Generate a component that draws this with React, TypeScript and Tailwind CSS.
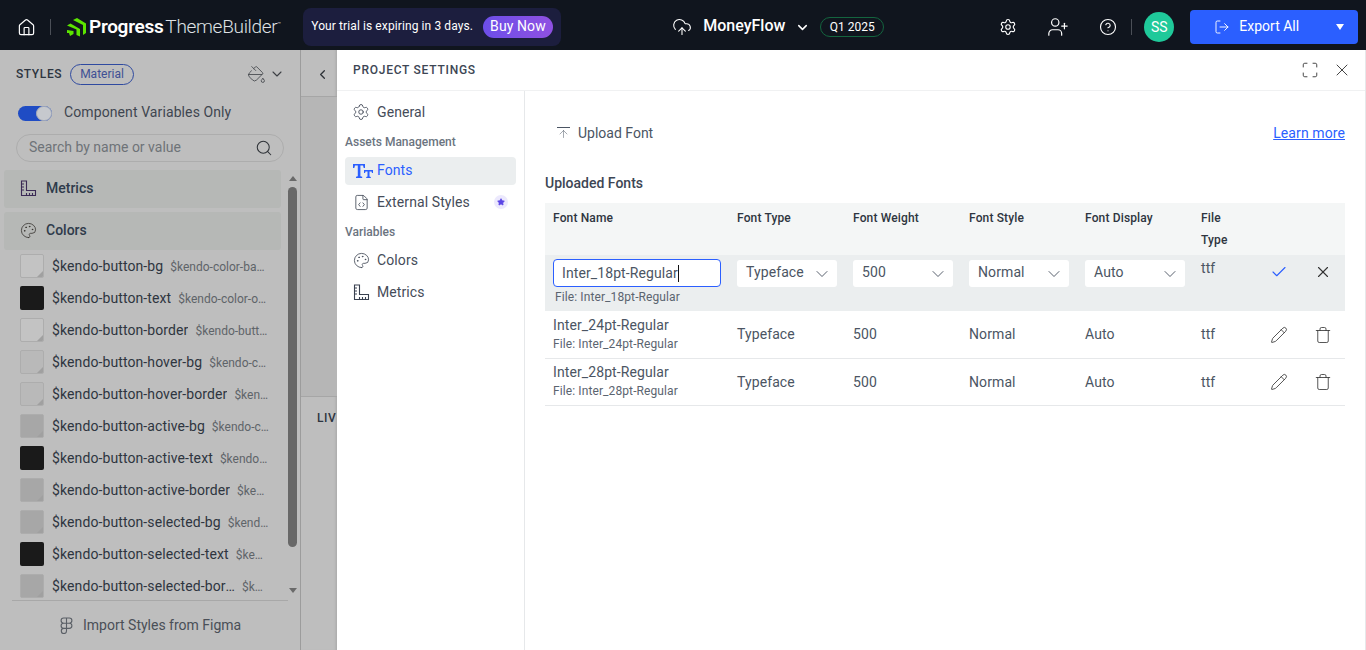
import React from "react";
import { Settings, UserPlus, CircleHelp, ChevronDown, ChevronLeft, Search, X, Check, Pencil, Trash, ArrowUp, Maximize, LogOut, Palette, FileCode, CloudUpload, Home, PaintBucket, Star } from "lucide-react";

const font = "font-['Roboto',sans-serif]";

const Ruler = ({ c = "#3a4150" }: { c?: string }) => (
  <svg width="17" height="17" viewBox="0 0 17 17" fill="none" stroke={c} strokeWidth="1.1">
    <path d="M1.500 1h5v9.500h9v5h-14z" />
    <path d="M1.500 4h2.500M1.500 7h2.500M1.500 10h2.500M6.500 15.500v-2.500M9.500 15.500v-2.500M12.500 15.500v-2.500" />
  </svg>
);

const Figma = () => (
  <svg width="13" height="17" viewBox="0 0 13 17" fill="none" stroke="#5a5f66" strokeWidth="1.1">
    <path d="M6.500 1H3.700a2.600 2.600 0 0 0 0 5.200h2.800zM6.500 1h2.800a2.600 2.600 0 0 1 0 5.200H6.500zM6.500 6.200H3.700a2.600 2.600 0 0 0 0 5.200h2.800zM6.500 6.200h2.800a2.600 2.600 0 0 1 0 5.200H6.500zM6.500 11.400H3.700a2.600 2.600 0 1 0 2.800 2.600z" />
  </svg>
);

const Logo = () => (
  <svg width="19" height="19" viewBox="0 0 19 19" fill="#5ce500">
    <path d="M6 2l4-2 9 5.500V15l-3 2V7zM0 7.500l3.500-2L13 11v7.500l-3.500-1.500V11.500zM0 12l6.500 1v3l-3.500 2-1-3H0z" />
  </svg>
);

const TT = () => (
  <svg width="20" height="14" viewBox="0 0 20 14" fill="#2b5fff">
    <path d="M0 0h12v4h-1.300L10 1.600H7.400v10.600l1.800.6V14H3v-1.200l1.800-.6V1.600H2L1.300 4H0zM11 6h9v3h-1l-.5-1.600h-2v5l1.300.5V14h-4.600v-1.100l1.300-.5v-5h-2L12 9h-1z" />
  </svg>
);

const swatches: { name: string; ref: string; color: string }[] = [
  { name: "$kendo-button-bg", ref: "$kendo-color-base-subtle", color: "#c3c3c3" },
  { name: "$kendo-button-text", ref: "$kendo-color-on-base-subtle", color: "#1a1a1a" },
  { name: "$kendo-button-border", ref: "$kendo-button-bg-color-value", color: "#c3c3c3" },
  { name: "$kendo-button-hover-bg", ref: "$kendo-color-base-subtle-hover", color: "#b9b9b9" },
  { name: "$kendo-button-hover-border", ref: "$kendo-button-hover-bg", color: "#b9b9b9" },
  { name: "$kendo-button-active-bg", ref: "$kendo-color-base-active", color: "#a7a7a7" },
  { name: "$kendo-button-active-text", ref: "$kendo-color-on-base", color: "#1a1a1a" },
  { name: "$kendo-button-active-border", ref: "$kendo-button-active-bg", color: "#a7a7a7" },
  { name: "$kendo-button-selected-bg", ref: "$kendo-color-base-active", color: "#a7a7a7" },
  { name: "$kendo-button-selected-text", ref: "$kendo-color-on-base", color: "#1a1a1a" },
  { name: "$kendo-button-selected-border", ref: "$kendo-button-selected-bg", color: "#a7a7a7" },
];

function Swatch({ color }: { color: string }) {
  const dark = color === "#1a1a1a";
  return (
    <span
      className={`relative block h-6 w-6 shrink-0 overflow-hidden rounded-[2px] ${dark ? "" : "border border-[#adadad]"}`}
      style={{ backgroundColor: color }}
    >
      {!dark && <span className="absolute bottom-0 right-0 h-0 w-0 border-b-[6px] border-l-[6px] border-b-[#a0a0a0] border-l-transparent" />}
    </span>
  );
}

function SwatchRow({ name, refName, color }: { name: string; refName: string; color: string }) {
  return (
    <div className="flex h-8 shrink-0 items-center pl-4 pr-3">
      <Swatch color={color} />
      <span className="ml-2 max-w-[183px] shrink-0 truncate text-[14px] leading-5 tracking-[0.1px] text-[#2e3540]">{name}</span>
      <span className="ml-[7px] mt-[2px] min-w-0 flex-1 truncate text-[12px] text-[#5e6469]">{refName}</span>
    </div>
  );
}

function Select({ value }: { value: string }) {
  return (
    <div className="flex h-[27px] w-[100px] items-center justify-between rounded-[3px] bg-white pl-[9px] pr-[5px] text-[14px] tracking-[0.1px] text-[#4b5563]">
      <span className="pb-[2px]">{value}</span>
      <ChevronDown size={20} strokeWidth={1} className="text-[#374151]" />
    </div>
  );
}

function NavItem({ icon, label, active, extra }: { icon: React.ReactNode; label: string; active?: boolean; extra?: React.ReactNode }) {
  return (
    <div className={`flex h-7 w-[171px] items-center rounded-[4px] pl-2 text-[14px] tracking-[0.1px] ${active ? "bg-[#ebeeef] pb-px text-[#2b5fff]" : "text-[#454c59]"}`}>
      <span className="flex w-6 shrink-0 items-center">{icon}</span>
      <span>{label}</span>
      {extra}
    </div>
  );
}

function FontRow({ n, h }: { n: string; h: string }) {
  return (
    <div className={`flex items-center border-b border-[#e6e8ea] text-[14px] tracking-[0.1px] text-[#4b5563] ${h}`}>
      <div className="w-[192px] pl-2">
        <div className="leading-[18px]">Inter_{n}pt-Regular</div>
        <div className="text-[12px] leading-[20px] text-[#5b6470]">File: Inter_{n}pt-Regular</div>
      </div>
      <div className="w-[116px]">Typeface</div>
      <div className="w-[116px]">500</div>
      <div className="w-[116px]">Normal</div>
      <div className="w-[116px]">Auto</div>
      <div className="w-[69px]">ttf</div>
      <Pencil size={18} strokeWidth={1.1} className="text-[#333]" />
      <Trash size={18} strokeWidth={1.1} className="ml-[26px] text-[#333]" />
    </div>
  );
}

export default function App() {
  return (
    <div className={`flex h-[650px] w-[1366px] flex-col overflow-hidden bg-[#bebebe] ${font}`}>
      <header className="flex h-[50px] shrink-0 items-center bg-[#10151e] pt-1 text-white">
        <Home size={19} strokeWidth={1.5} className="ml-[17px] shrink-0" />
        <span className="ml-[14px] h-4 w-px shrink-0 bg-[#4b4f57]" />
        <span className="ml-[16px] shrink-0"><Logo /></span>
        <span className="ml-[3px] text-[19px] font-semibold tracking-[-0.3px]">Progress</span>
        <span className="ml-[2px] text-[19px] font-light tracking-[-0.3px] text-[#dfe1e4]">ThemeBuilder</span>
        <span className="mb-2 text-[6px] text-[#cfd1d4]">™</span>
        <div className="ml-[22px] flex h-[38px] w-[258px] shrink-0 items-center rounded-[8px] bg-[#1c1e3e] pl-2 text-[12px] tracking-[0.1px] text-white">
          <span className="pb-[2px]">Your trial is expiring in 3 days.</span>
          <span className="ml-[10px] flex h-[22px] items-center rounded-full bg-gradient-to-r from-[#6c4ee8] to-[#8f50e2] px-[7px] pb-px text-[14px]">Buy Now</span>
        </div>
        <CloudUpload size={20} strokeWidth={1.3} className="ml-[111px] shrink-0" />
        <span className="ml-[11px] pb-[2px] text-[16px] font-medium">MoneyFlow</span>
        <ChevronDown size={15} strokeWidth={2.4} className="ml-[10px] shrink-0" />
        <span className="ml-[10px] flex h-5 w-[64px] items-center justify-center rounded-full border border-[#14653f] text-[12px]">Q1 2025</span>
        <Settings size={18} strokeWidth={1.5} className="ml-[115px] shrink-0" />
        <UserPlus size={22} strokeWidth={1.3} className="ml-[30px] shrink-0" />
        <CircleHelp size={18} strokeWidth={1.5} className="ml-[30px] shrink-0" />
        <span className="ml-[14px] h-4 w-px shrink-0 bg-[#4b4f57]" />
        <span className="ml-[12px] flex h-[30px] w-[30px] shrink-0 items-center justify-center rounded-full bg-[#1fc99a] text-[14px]">SS</span>
        <div className="ml-4 flex h-[34px] w-[168px] shrink-0 items-center rounded-[4px] bg-[#2b5fff] pl-[24px] text-[14px]">
          <LogOut size={16} strokeWidth={1.4} />
          <span className="ml-[9px] pb-[2px]">Export All</span>
          <span className="ml-[37px] h-0 w-0 border-x-[4.5px] border-t-[6px] border-x-transparent border-t-white" />
        </div>
      </header>

      <div className="flex min-h-0 flex-1">
        <aside className="flex w-[301px] shrink-0 flex-col border-r border-[#9c9c9c]">
          <div className="flex h-[48px] shrink-0 items-center pl-4 pr-[15px]">
            <span className="text-[12px] font-medium tracking-[0.6px] text-[#2d3540]">STYLES</span>
            <span className="ml-2 flex h-[21px] items-center rounded-full border border-[#2f4aa0] px-[9px] text-[12px] text-[#3f5094]">Material</span>
            <PaintBucket size={19} strokeWidth={1} className="ml-auto text-[#3c3f44]" />
            <ChevronDown size={16} strokeWidth={1.6} className="ml-[3px] text-[#3c3f44]" />
          </div>
          <div className="mt-1 flex shrink-0 items-center pl-[18px]">
            <span className="relative block h-[15px] w-[34px] rounded-full bg-[#1f4cc4]">
              <span className="absolute right-0 top-0 h-[15px] w-[16px] rounded-full border border-[#a9aeb8] bg-[#c6c9ce]" />
            </span>
            <span className="ml-3 pb-[2px] text-[14px] tracking-[0.1px] text-[#3f4650]">Component Variables Only</span>
          </div>
          <div className="ml-4 mt-[9px] flex h-7 w-[268px] shrink-0 items-center rounded-full border border-[#adadad] pb-px pl-3 pr-[10px] text-[14px] text-[#6e7378]">
            <span>Search by name or value</span>
            <Search size={18} strokeWidth={1.4} className="ml-auto text-[#2f3338]" />
          </div>
          <div className="mt-2 flex min-h-0 flex-1">
            <div className="flex w-[281px] shrink-0 flex-col overflow-hidden pl-1">
              <div className="flex h-[38px] shrink-0 items-center rounded-[3px] bg-[#b6b8b6] pb-[2px] pl-4 text-[14px] font-medium text-[#2f3b4b]">
                <Ruler c="#3b2a55" />
                <span className="ml-[9px]">Metrics</span>
              </div>
              <div className="mt-[4px] flex h-[38px] shrink-0 items-center rounded-[3px] bg-[#b6b8b6] pb-[2px] pl-4 text-[14px] font-medium text-[#2f3b4b]">
                <Palette size={17} strokeWidth={1.1} className="text-[#34302c]" />
                <span className="ml-[9px]">Colors</span>
              </div>
              {swatches.map((s) => (
                <SwatchRow key={s.name} name={s.name} refName={s.ref} color={s.color} />
              ))}
            </div>
            <div className="ml-[5px] flex w-[13px] shrink-0 flex-col items-center pt-[6px]">
              <span className="h-0 w-0 border-x-[4.5px] border-b-[5px] border-x-transparent border-b-[#6a6a6a]" />
              <span className="mt-[6px] h-[360px] w-[9px] rounded-full bg-[#686868]" />
              <span className="mt-[41px] h-0 w-0 border-x-[4.5px] border-t-[5px] border-x-transparent border-t-[#6a6a6a]" />
            </div>
          </div>
          <div className="mx-3 h-px shrink-0 bg-[#a8a8a8]" />
          <div className="flex h-[49px] shrink-0 items-center pl-[60px] text-[14px] text-[#4a4f57]">
            <Figma />
            <span className="ml-[10px]">Import Styles from Figma</span>
          </div>
        </aside>

        <main className="flex w-[36px] shrink-0 flex-col overflow-hidden shadow-[inset_-3px_0_3px_-2px_rgba(0,0,0,0.12)]">
          <div className="flex h-[47px] shrink-0 items-center border-b border-[#a6a6a6] pl-[14px] pt-[3px]">
            <ChevronLeft size={15} strokeWidth={2} className="text-[#2e3238]" />
          </div>
          <div className="h-[300px] shrink-0 border-b border-[#a6a6a6] bg-[#b6b6b6]" />
          <div className="flex h-[42px] items-center whitespace-nowrap pl-4 text-[12px] font-medium tracking-[0.6px] text-[#2d3540]">LIV</div>
        </main>

        <section className="flex min-w-0 flex-1 flex-col border-r border-[#e6e8ea] bg-white">
          <div className="flex h-[41px] shrink-0 items-center border-b border-[#f0f1f2] pl-4 pr-[13px]">
            <span className="text-[12px] font-medium tracking-[0.75px] text-[#3d4654]">PROJECT SETTINGS</span>
            <Maximize size={18} strokeWidth={1.2} className="ml-auto text-[#333]" />
            <X size={20} strokeWidth={1.1} className="ml-[13px] text-[#333]" />
          </div>
          <div className="flex min-h-0 flex-1">
            <nav className="flex w-[188px] shrink-0 flex-col border-r border-[#e6e8ea] pl-2 pt-[7px]">
              <NavItem icon={<Settings size={18} strokeWidth={1.2} className="-ml-px" />} label="General" />
              <div className="mt-[6px] h-[20px] text-[12px] font-medium leading-5 text-[#6b7480]">Assets Management</div>
              <div className="mt-[5px]"><NavItem icon={<TT />} label="Fonts" active /></div>
              <div className="mt-[3px]">
                <NavItem
                  icon={<FileCode size={17} strokeWidth={1.2} />}
                  label="External Styles"
                  extra={
                    <span className="ml-auto mr-[8px] flex h-[14px] w-[14px] items-center justify-center rounded-full bg-[#ece9fd]">
                      <Star size={8} fill="#5b45e6" stroke="#5b45e6" />
                    </span>
                  }
                />
              </div>
              <div className="mt-[6px] h-[20px] text-[12px] font-medium leading-5 text-[#6b7480]">Variables</div>
              <div className="mt-[4px]"><NavItem icon={<Palette size={17} strokeWidth={1.2} />} label="Colors" /></div>
              <div className="mt-1"><NavItem icon={<Ruler />} label="Metrics" /></div>
            </nav>

            <div className="min-w-0 flex-1 pl-5 pr-5">
              <div className="mt-[32px] flex h-5 items-center text-[14px]">
                <ArrowUp size={13} strokeWidth={1} className="ml-3 border-t border-[#4b5563] text-[#4b5563]" />
                <span className="ml-2 text-[#4b5563]">Upload Font</span>
                <a className="ml-auto tracking-[0.1px] text-[#2b5fff] underline">Learn more</a>
              </div>
              <div className="mt-[30px] text-[14px] font-medium leading-5 text-[#3d4654]">Uploaded Fonts</div>
              <div className="mt-[10px] flex h-[52px] bg-[#f4f6f6] pt-[4px] text-[12px] font-medium leading-[22px] tracking-[0.15px] text-[#2e3540]">
                <div className="w-[192px] pl-2">Font Name</div>
                <div className="w-[116px]">Font Type</div>
                <div className="w-[116px]">Font Weight</div>
                <div className="w-[116px]">Font Style</div>
                <div className="w-[116px]">Font Display</div>
                <div className="w-[40px]">File Type</div>
              </div>
              <div className="flex h-[56px] bg-[#ebeeef] text-[14px] tracking-[0.1px] text-[#4b5563]">
                <div className="w-[192px] pl-2 pt-1">
                  <div className="flex h-7 w-[168px] items-center rounded-[4px] border border-[#2b5fff] bg-white pl-2 text-[#4b5563]">
                    Inter_18pt-Regular<span className="h-[17px] w-px bg-[#111]" />
                  </div>
                  <div className="ml-[2px] mt-px text-[12px] leading-[18px] text-[#5b6470]">File: Inter_18pt-Regular</div>
                </div>
                <div className="w-[116px] pt-[5px]"><Select value="Typeface" /></div>
                <div className="w-[116px] pt-[5px]"><Select value="500" /></div>
                <div className="w-[116px] pt-[5px]"><Select value="Normal" /></div>
                <div className="w-[116px] pt-[5px]"><Select value="Auto" /></div>
                <div className="w-[70px] pt-[3px]">ttf</div>
                <div className="flex h-[34px] items-center">
                  <Check size={18} strokeWidth={1.5} className="-ml-px text-[#2b5fff]" />
                  <X size={18} strokeWidth={1.5} className="ml-[26px] text-[#333]" />
                </div>
              </div>
              <FontRow n="24" h="h-[48px]" />
              <FontRow n="28" h="h-[47px]" />
            </div>
          </div>
        </section>
      </div>
    </div>
  );
}
